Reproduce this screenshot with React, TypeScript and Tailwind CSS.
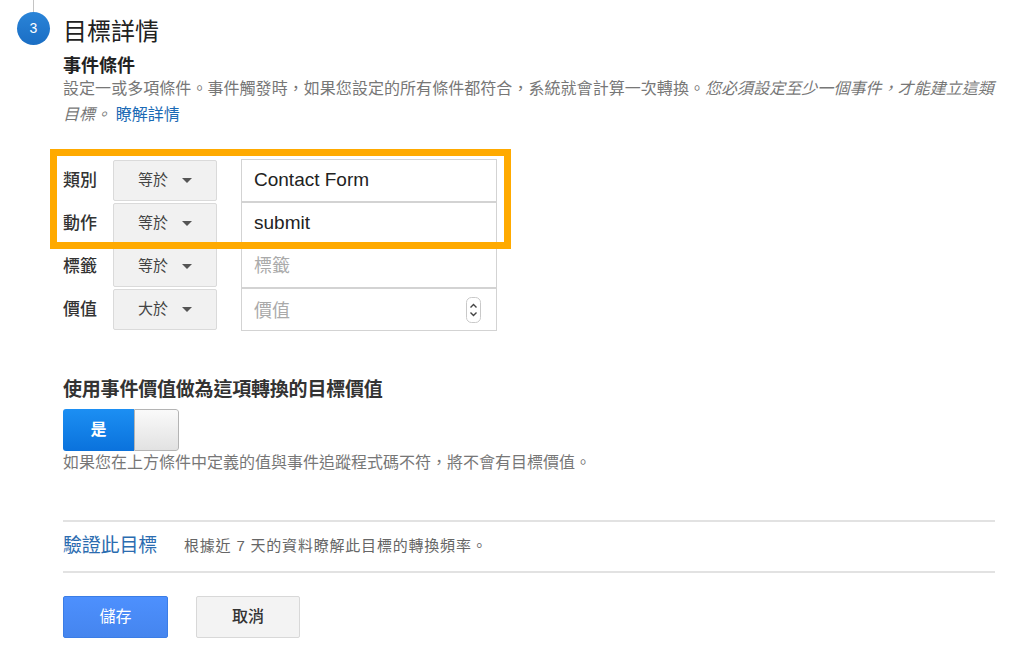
import React from "react";

type Row = {
  label: string;
  op: string;
  value?: string;
  placeholder?: string;
  spinner?: boolean;
};

const rows: Row[] = [
  { label: "類別", op: "等於", value: "Contact Form" },
  { label: "動作", op: "等於", value: "submit" },
  { label: "標籤", op: "等於", placeholder: "標籤" },
  { label: "價值", op: "大於", placeholder: "價值", spinner: true },
];

function Caret() {
  return (
    <svg width="10" height="5" viewBox="0 0 10 5">
      <path d="M0 0h10L5 5z" fill="#555" />
    </svg>
  );
}

function Spinner() {
  return (
    <svg width="15" height="26" viewBox="0 0 15 26">
      <rect x="0.5" y="0.5" width="14" height="25" rx="5" fill="#fff" stroke="#c9c9c9" />
      <path d="M4.5 10.5l3-3 3 3" fill="none" stroke="#444" strokeWidth="1.4" />
      <path d="M4.5 15.5l3 3 3-3" fill="none" stroke="#444" strokeWidth="1.4" />
    </svg>
  );
}

function ConditionRow({ row }: { row: Row }) {
  return (
    <div className="flex items-center h-[43px]">
      <div className="w-[50px] text-[17px] font-medium text-[#333]">{row.label}</div>
      <div className="w-[104px] h-[41px] flex items-center justify-center gap-[14px] bg-[#f1f1f1] border border-[#dadada] rounded-[2px] text-[15px] text-[#444]">
        <span>{row.op}</span>
        <Caret />
      </div>
      <div className="ml-[24px] w-[256px] h-[43px] flex items-center justify-between border border-[#d3d3d3] bg-white pl-[12px] pr-[15px]">
        {row.value ? (
          <span className="text-[19px] text-[#222]">{row.value}</span>
        ) : (
          <span className={"text-[18px] text-[#aaa] " + (row.spinner ? "mt-[4px]" : "")}>{row.placeholder}</span>
        )}
        {row.spinner && <Spinner />}
      </div>
    </div>
  );
}

export default function App() {
  return (
    <div className="w-[1024px] h-[648px] bg-white flex overflow-hidden font-[family-name:'Liberation_Sans','Noto_Sans_CJK_TC',sans-serif]">
      {/* step gutter */}
      <div className="w-[63px] shrink-0 flex flex-col items-start">
        <div className="ml-[33px] w-px h-[12px] bg-[#c4c4c4]" />
        <div className="ml-[17px] w-[33px] h-[33px] rounded-full bg-gradient-to-b from-[#2a84d8] to-[#1a6ec4] flex items-center justify-center text-white text-[14px]">
          3
        </div>
      </div>

      <div className="flex-1 pr-[29px] pt-[17px]">
        <div className="text-[24px] leading-[30px] text-[#222]">目標詳情</div>
        <div className="mt-[8px] text-[18px] leading-[22px] font-bold text-[#222]">事件條件</div>
        <div className="-mt-[1px] text-[16px] leading-[26px] tracking-[0.05px] text-[#777]">
          設定一或多項條件。事件觸發時，如果您設定的所有條件都符合，系統就會計算一次轉換。
          <i>您必須設定至少一個事件，才能建立這類</i>
          <br />
          <i>目標。</i> <a className="text-[#1b6ab5] not-italic">瞭解詳情</a>
        </div>

        {/* conditions */}
        <div className="relative mt-[31px]">
          {rows.map((r) => (
            <ConditionRow key={r.label} row={r} />
          ))}
          <div className="absolute left-[-13px] top-[-10px] w-[461px] h-[100px] border-[7px] border-[#ffaa00] pointer-events-none" />
        </div>

        <div className="mt-[47px] text-[19px] leading-[24px] tracking-[-0.2px] font-bold text-[#333]">
          使用事件價值做為這項轉換的目標價值
        </div>
        <div className="mt-[7px] w-[116px] h-[42px] flex rounded-[3px] overflow-hidden">
          <div className="w-[71px] bg-gradient-to-b from-[#1c8ff3] to-[#0a72dc] flex items-center justify-center text-white text-[16px] font-bold">
            是
          </div>
          <div className="flex-1 bg-gradient-to-b from-[#fafafa] to-[#e2e2e2] border border-[#b4b4b4] rounded-r-[3px]" />
        </div>
        <div className="mt-[1px] text-[16px] leading-[22px] text-[#777]">
          如果您在上方條件中定義的值與事件追蹤程式碼不符，將不會有目標價值。
        </div>

        <div className="mt-[46px] h-[2px] bg-[#e2e2e2]" />
        <div className="h-[49px] flex items-center">
          <span className="text-[19px] text-[#2b6cb0] tracking-[-0.2px]">驗證此目標</span>
          <span className="ml-[27px] text-[15px] text-[#666] tracking-[0.8px]">根據近 7 天的資料瞭解此目標的轉換頻率。</span>
        </div>
        <div className="h-[2px] bg-[#e2e2e2]" />

        <div className="mt-[23px] flex gap-[28px]">
          <button className="w-[105px] h-[42px] rounded-[2px] bg-gradient-to-b from-[#4d90fe] to-[#4585ee] border border-[#3b7de6] text-white text-[16px]">
            儲存
          </button>
          <button className="w-[104px] h-[42px] rounded-[2px] bg-[#f3f3f3] border border-[#d8d8d8] text-[#333] text-[16px] font-medium">
            取消
          </button>
        </div>
      </div>
    </div>
  );
}
